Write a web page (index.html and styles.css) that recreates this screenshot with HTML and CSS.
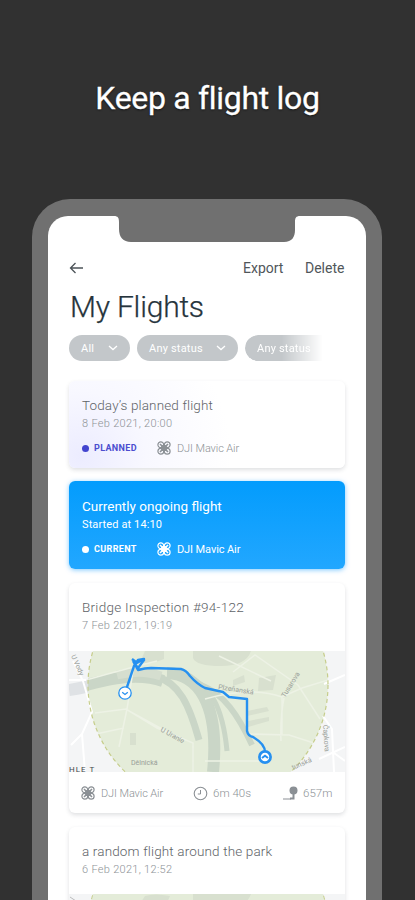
FILE: index.html
```html
<!DOCTYPE html>
<html lang="en">
<head>
<meta charset="utf-8">
<title>Flight log</title>
<link rel="stylesheet" href="styles.css">
</head>
<body>
<svg width="0" height="0" class="defs" aria-hidden="true">
  <symbol id="drone" viewBox="0 0 14 14">
    <g fill="none" stroke="currentColor" stroke-width="1.2">
      <circle cx="3.8" cy="3.8" r="2.9"/><circle cx="10.2" cy="3.8" r="2.9"/>
      <circle cx="3.8" cy="10.2" r="2.9"/><circle cx="10.2" cy="10.2" r="2.9"/>
      <path d="M3 3l8 8M11 3l-8 8" stroke-width="1.6"/>
    </g>
    <rect x="4.2" y="4" width="5.6" height="6" rx="1.5" fill="currentColor"/>
  </symbol>
  <symbol id="chevron" viewBox="0 0 10 6"><path d="M1 1l4 3.6L9 1" fill="none" stroke="currentColor" stroke-width="1.3"/></symbol>
</svg>
<main class="page">
  <h1 class="headline">Keep a flight log</h1>
  <div class="phone">
    <div class="screen">
      <svg class="notch" viewBox="0 0 186 26"><path d="M0 0C4 0 5 2 5 6v7c0 8 4 13 12 13h153c8 0 11-5 11-12V6c0-4 1-6 5-6z" fill="#707070"/></svg>
      <nav class="nav">
        <svg class="back" viewBox="0 0 15 12"><path d="M6.5 1L1.5 6l5 5M1.5 6H14" fill="none" stroke="#4c5358" stroke-width="1.3"/></svg>
        <span class="export">Export</span><span class="delete">Delete</span>
      </nav>
      <h2 class="title">My Flights</h2>
      <div class="filters">
        <span class="pill all"><span>All</span><svg><use href="#chevron"/></svg></span>
        <span class="pill status"><span>Any status</span><svg><use href="#chevron"/></svg></span>
        <span class="pill cut"><span>Any status</span></span>
      </div>
      <article class="card planned">
        <h3 class="t1">Today’s planned flight</h3>
        <p class="date">8 Feb 2021, 20:00</p>
        <div class="meta"><i class="dot"></i><b>PLANNED</b><svg class="drone"><use href="#drone"/></svg><span class="model">DJI Mavic Air</span></div>
      </article>
      <article class="card current">
        <h3 class="t2">Currently ongoing flight</h3>
        <p class="date started">Started at 14:10</p>
        <div class="meta"><i class="dot"></i><b>CURRENT</b><svg class="drone"><use href="#drone"/></svg><span class="model">DJI Mavic Air</span></div>
      </article>
      <article class="card logged">
        <h3 class="t3">Bridge Inspection #94-122</h3>
        <p class="date">7 Feb 2021, 19:19</p>
        <svg class="map" viewBox="0 0 276 121">
          <defs><clipPath id="zone"><circle cx="139" cy="34" r="120"/></clipPath></defs>
          <rect width="276" height="121" fill="#f4f5f6"/>
          <path d="M0 39Q16 37 30 32" fill="none" stroke="#dfe2e5" stroke-width="12"/>
          <circle cx="139" cy="34" r="120" fill="#e4ecd9"/>
          <g clip-path="url(#zone)">
            <path d="M76 0h19v8q-14 6-24 3zM124 0h58q-5 15-30 15t-28-8z" fill="#d8e0cf"/>
            <path d="M190 27l17-3-3 15-15 1zM164 29l11-5 1 7-12 4zM61 82h6v12h-6zM178 60l20-4 2 4-22 5zM179 70l21-4v4l-21 6z" fill="#d8e0cf"/>
            <g fill="none" stroke="#cad6c7">
              <path d="M0 39C30 30 65 20 94 30" stroke-width="12"/>
              <path d="M88 26C110 32 120 53 130 89" stroke-width="7"/>
              <path d="M98 22C128 23 151 51 144 121" stroke-width="12"/>
              <path d="M112 25C142 30 154 58 158 100" stroke-width="5"/>
              <path d="M132 34C155 43 169 64 183 94" stroke-width="6"/>
              <path d="M48 24Q72 18 92 25" stroke="#d5decf" stroke-width="9"/>
            </g>
            <g fill="none" stroke="#edf2e5" stroke-width="1.5">
              <path d="M17 29Q60 17 88 10M64 20l-6 38-8 38M26 62l31-4 31 19 36 15v29M60 60l44 24M136 48q45-13 77-2l20-9 45-14M164 21l22-17 43 30 22 34M213 46v38M180 83l40 1 28 9M136 110h66M150 5l52 25M215 47q-4 20-3 43M22 84l33-7"/>
            </g>
          </g>
          <g fill="none" stroke="#fff" stroke-width="2">
            <path d="M4 10l10 20 9 31-10 22-11 11M13 83l3 38M0 29h17" />
            <path d="M254 65l9 13 2 43M250 108l26-12M255 33l21-9M265 102l11 8"/>
          </g>
          <circle cx="139" cy="34" r="120" fill="none" stroke="#c6cd8b" stroke-width="1.2" stroke-dasharray="4 3"/>
          <g class="labels">
            <text x="62" y="114">Dělnická</text>
            <text transform="translate(91 80) rotate(29)">U Uranie</text>
            <text transform="translate(149 38) rotate(9)">Plzeňanská</text>
            <text transform="translate(216 47) rotate(-58)">Tusarova</text>
            <text transform="translate(254 74) rotate(86)">Čapkova</text>
            <text transform="translate(224 119) rotate(-24)">tunská</text>
            <text transform="translate(2 5) rotate(66)">U Vody</text>
            <text x="0" y="120.5" class="area">HLE T</text>
          </g>
          <path d="M56 42l9-27 4-6 6-1-9 5 3 4 6-8-8 2-4-3M64 10l5 9q7-2 13-2l30 1q5 1 9 7 7 8 15 12l18 4 6 5 18 2v32q1 5 6 6 12 7 12 15v7" fill="none" stroke="#2690f0" stroke-width="2.4" stroke-linejoin="round"/>
          <circle cx="56" cy="42" r="6.2" fill="#fff" stroke="#2690f0" stroke-width="1.3"/>
          <path d="M53.2 41.2l2.8 2.2 2.8-2.2" fill="none" stroke="#2690f0" stroke-width="1.3"/>
          <circle cx="196" cy="106" r="5.6" fill="#fff" stroke="#2690f0" stroke-width="2.7"/>
          <path d="M193 107l3-2.3 3 2.3" fill="none" stroke="#2690f0" stroke-width="2"/>
        </svg>
        <div class="stats">
          <svg class="drone"><use href="#drone"/></svg><span class="model">DJI Mavic Air</span>
          <svg class="clock" viewBox="0 0 15 15"><circle cx="7.5" cy="7.5" r="6.3" fill="none" stroke="#8b9095" stroke-width="1.1"/><path d="M7.5 4v4H4.8" fill="none" stroke="#8b9095"/></svg><span class="time">6m 40s</span>
          <svg class="pin" viewBox="0 0 15 15"><circle cx="10.5" cy="4.5" r="4" fill="#8b9095"/><path d="M10.5 6v6.5H7" fill="none" stroke="#8b9095" stroke-width="2"/><path d="M0 13h8" stroke="#8b9095" stroke-width="1.2"/></svg><span class="dist">657m</span>
        </div>
      </article>
      <article class="card park">
        <h3 class="t4">a random flight around the park</h3>
        <p class="date">6 Feb 2021, 12:52</p>
        <svg class="map" viewBox="0 0 276 121">
          <rect width="276" height="121" fill="#f4f5f6"/>
          <circle cx="139" cy="34" r="120" fill="#e4ecd9" stroke="#c6cd8b" stroke-dasharray="4 3"/>
          <path d="M76 2q10-3 25 0l-4 9H70zM124 0h58q-5 15-30 15t-28-8z" fill="#d8e0cf"/>
          <path d="M1 3l6 4" stroke="#bbb"/>
        </svg>
      </article>
    </div>
  </div>
</main>
</body>
</html>
```
FILE: styles.css
```css
* { box-sizing: border-box; margin: 0; padding: 0; }
body { background: #313131; font-family: Roboto, "Open Sans", sans-serif; overflow: hidden; }
.defs { display: block; }
.page { width: 415px; height: 900px; overflow: hidden; }
.headline { height: 199px; padding-top: 77px; text-align: center; color: #fff; font-size: 32px; line-height: 42px; font-weight: 400; letter-spacing: -0.3px; text-shadow: 0 1px 2px #111; white-space: nowrap; -webkit-text-stroke: .3px #fff; }
.phone { width: 350px; height: 740px; margin-left: 32px; padding: 17px 16px 0; background: #707070; border-radius: 38px 38px 0 0; }
.screen { height: 723px; background: #fff; border-radius: 20px 20px 0 0; padding: 0 21px; overflow: hidden; }
.notch { display: block; width: 186px; height: 26px; margin-left: 45px; }
.nav { display: flex; align-items: center; height: 24px; margin-top: 14px; color: #50565a; font-size: 14px; line-height: 24px; }
.back { width: 15px; height: 12px; margin-right: auto; }
.export { width: 62px; }
.delete { width: 40px; }
.title { margin: 7px 0 0 1px; height: 40px; color: #26343c; font-size: 30px; line-height: 40px; font-weight: 300; letter-spacing: -0.2px; white-space: nowrap; -webkit-text-stroke: .25px #26343c; }
.filters { display: flex; gap: 7px; height: 26px; margin-top: 8px; }
.pill { display: flex; align-items: center; justify-content: space-between; flex: none; height: 26px; border-radius: 13px; background: #c3c7ca; color: #fff; font-size: 11px; letter-spacing: .2px; padding: 0 12px; }
.pill svg { width: 10px; height: 6px; }
.all { width: 61px; }
.status { width: 101px; }
.cut { width: 81px; border-radius: 13px 0 0 13px; padding-right: 0; -webkit-mask-image: linear-gradient(90deg, #000 45%, transparent 96%); mask-image: linear-gradient(90deg, #000 45%, transparent 96%); }
.card { width: 276px; border-radius: 6px; background: #fff; box-shadow: 0 2px 4px rgba(40, 50, 60, .15); color: #5e6367; overflow: hidden; }
.card h3 { height: 18px; margin: 15px 0 0 13px; font-size: 13.5px; line-height: 18px; font-weight: 300; white-space: nowrap; }
.card .t1 { letter-spacing: .13px; }
.card .t2 { line-height: 20px; }
.card .t3 { letter-spacing: .27px; line-height: 19px; }
.card .t4 { letter-spacing: .15px; line-height: 19px; }
.date { height: 16px; margin: 1px 0 0 13px; color: #8d9296; font-size: 11px; line-height: 17px; font-weight: 300; letter-spacing: .3px; white-space: nowrap; }
.started { line-height: 20px; letter-spacing: .12px; }
.meta { display: flex; align-items: center; height: 16px; margin: 9px 0 0 13px; font-size: 11px; font-weight: 300; color: #8d9296; }
.dot { width: 7px; height: 7px; border-radius: 50%; background: #4244cf; margin-right: 5px; }
.meta b { width: 63px; font-size: 9px; font-weight: 700; letter-spacing: .35px; color: #4b4dcf; }
.drone { width: 14px; height: 14px; margin-right: 6px; color: #8b9095; }
.meta .model { letter-spacing: -.1px; }
.planned { height: 87px; margin-top: 20px; background: radial-gradient(circle at 12px 75px, #ececff 0, #f8f8ff 65px, #fff 150px); }
.current { height: 88px; margin-top: 13px; background: linear-gradient(#039cfd, #22a7ff); color: #fff; box-shadow: 0 1px 5px rgba(0, 150, 255, .5); }
.current h3, .current .date, .current .meta { font-weight: 400; color: #fff; }
.current .meta { margin-top: 10px; }
.current b, .current .drone { color: #fff; }
.current .dot { background: #fff; }
.logged { height: 230px; margin-top: 14px; }
.logged .date, .park .date { margin-top: 0; line-height: 19px; }
.map { display: block; width: 276px; height: 121px; }
.logged .map { margin-top: 19px; }
.labels { fill: #989d98; font-size: 7px; }
.area { fill: #44484b; font-size: 8px; letter-spacing: 1px; }
.stats { display: flex; align-items: center; height: 42px; padding-left: 12px; color: #8d9296; font-size: 11.5px; font-weight: 300; }
.stats .model { width: 92px; font-size: 11px; letter-spacing: -.1px; }
.clock { width: 15px; height: 15px; margin-right: 5px; }
.time { width: 70px; }
.pin { width: 15px; height: 15px; margin-right: 5px; }
.park { height: 230px; margin-top: 14px; }
.park .map { margin-top: 18px; }
```
